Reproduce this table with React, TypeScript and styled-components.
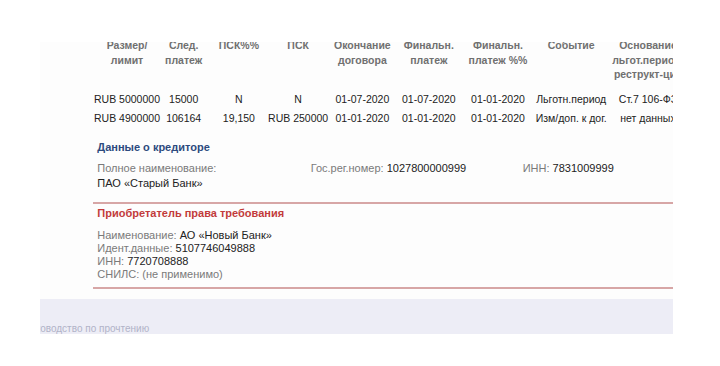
import React from 'react';
import styled, { createGlobalStyle } from 'styled-components';

const GlobalStyle = createGlobalStyle`
  html, body {
    margin: 0;
    padding: 0;
    background: #ffffff;
  }
  body {
    font-family: "Liberation Sans", Arial, sans-serif;
    color: #222222;
  }
`;

const COLUMNS = '58.5px 54.85px 55.6px 62.9px 65.65px 67.25px 71px 75.5px 78px';

const headers: string[][] = [
  ['Размер/', 'лимит'],
  ['След.', 'платеж'],
  ['ПСК%%'],
  ['ПСК'],
  ['Окончание', 'договора'],
  ['Финальн.', 'платеж'],
  ['Финальн.', 'платеж %%'],
  ['Событие'],
  ['Основание', 'льгот.период/', 'реструкт-ция'],
];

const rows: string[][] = [
  ['RUB 5000000', '15000', 'N', 'N', '01-07-2020', '01-07-2020', '01-01-2020', 'Льготн.период', 'Ст.7 106-ФЗ'],
  ['RUB 4900000', '106164', '19,150', 'RUB 250000', '01-01-2020', '01-01-2020', '01-01-2020', 'Изм/доп. к дог.', 'нет данных'],
];

export default function App() {
  return (
    <>
      <GlobalStyle />
      <Viewport>
        <Table>
          <HeadRow>
            {headers.map((lines, i) => (
              <HeadCell key={i}>
                {lines.map((l) => (
                  <span key={l}>{l}</span>
                ))}
              </HeadCell>
            ))}
          </HeadRow>
          {rows.map((r, i) => (
            <DataRow key={i}>
              {r.map((v, j) => (
                <Cell key={j}>{v}</Cell>
              ))}
            </DataRow>
          ))}
        </Table>

        <Section $first>
          <SectionTitle $color="#2d4a7e">Данные о кредиторе</SectionTitle>
          <FieldGrid>
            <Label>Полное наименование:</Label>
            <Field>
              <Label>Гос.рег.номер: </Label>
              <Value>1027800000999</Value>
            </Field>
            <Field>
              <Label>ИНН: </Label>
              <Value>7831009999</Value>
            </Field>
            <Value>ПАО «Старый Банк»</Value>
          </FieldGrid>
        </Section>

        <Section>
          <SectionTitle $color="#c23b3b">Приобретатель права требования</SectionTitle>
          <List>
            <Line>
              <Label>Наименование: </Label>
              <Value>АО «Новый Банк»</Value>
            </Line>
            <Line>
              <Label>Идент.данные: </Label>
              <Value>5107746049888</Value>
            </Line>
            <Line>
              <Label>ИНН: </Label>
              <Value>7720708888</Value>
            </Line>
            <Line>
              <Label>СНИЛС: (не применимо)</Label>
            </Line>
          </List>
        </Section>

        <Footer>
          <FooterText>Руководство по прочтению</FooterText>
        </Footer>
      </Viewport>
    </>
  );
}

const Viewport = styled.div`
  margin: 42px 0 0 40px;
  width: 633px;
  height: 292px;
  overflow: hidden;
  background: #fdfdfd;
`;

const Table = styled.div`
  margin: -3.6px 0 0 57.75px;
  display: flex;
  flex-direction: column;
`;

const HeadRow = styled.div`
  display: grid;
  grid-template-columns: ${COLUMNS};
  padding-bottom: 7.6px;
`;

const DataRow = styled.div`
  display: grid;
  grid-template-columns: ${COLUMNS};
`;

const HeadCell = styled.div`
  display: flex;
  flex-direction: column;
  align-items: center;
  font-size: 10.5px;
  line-height: 14.5px;
  font-weight: bold;
  color: #707070;
  white-space: nowrap;
`;

const Cell = styled.div`
  display: flex;
  justify-content: center;
  font-size: 10.5px;
  line-height: 19px;
  color: #222222;
  white-space: nowrap;
`;

const Section = styled.div<{ $first?: boolean }>`
  margin-left: 53px;
  padding: ${(p) => (p.$first ? '12.9px 0 11.6px 4.3px' : '1.9px 0 6px 4.3px')};
  border-bottom: 2px solid #d7a6a6;
`;

const SectionTitle = styled.div<{ $color: string }>`
  font-size: 11px;
  line-height: 14px;
  font-weight: bold;
  color: ${(p) => p.$color};
`;

const FieldGrid = styled.div`
  margin-top: 6.5px;
  display: grid;
  grid-template-columns: 213.4px 212px 1fr;
  font-size: 11px;
  line-height: 15px;
  white-space: nowrap;
`;

const Field = styled.div``;

const Label = styled.span`
  color: #7a7a7a;
`;

const Value = styled.span`
  color: #222222;
`;

const List = styled.div`
  margin-top: 8.5px;
  display: flex;
  flex-direction: column;
  font-size: 11px;
  line-height: 13px;
`;

const Line = styled.div`
  white-space: nowrap;
`;

const Footer = styled.div`
  margin-top: 10.5px;
  height: 60px;
  padding-top: 23.4px;
  box-sizing: border-box;
  background: #ededf6;
`;

const FooterText = styled.div`
  margin-left: -16px;
  font-size: 10px;
  line-height: 12px;
  color: #b1b3c8;
  white-space: nowrap;
`;
